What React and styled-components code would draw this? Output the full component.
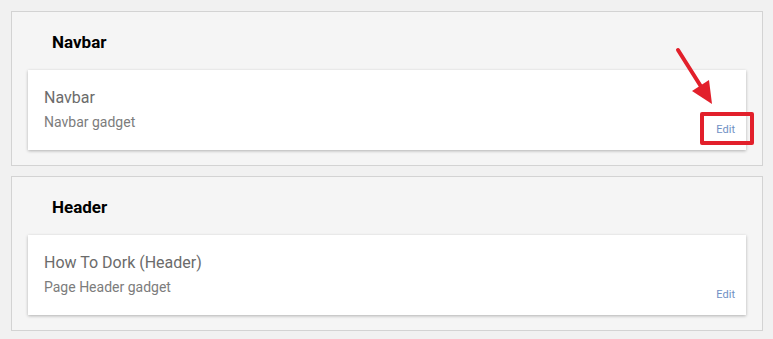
import React from "react";
import styled, { createGlobalStyle } from "styled-components";

const Global = createGlobalStyle`
  html, body { margin: 0; padding: 0; background: #f1f1f1; }
  body { font-family: Roboto, "Liberation Sans", Arial, sans-serif; }
`;

const Page = styled.div`
  display: flex;
  flex-direction: column;
  gap: 10px;
  padding: 11px 10px 0 11px;
  width: 752px;
`;

const Section = styled.section`
  position: relative;
  box-sizing: border-box;
  height: 155px;
  background: #f5f5f5;
  border: 1px solid #d3d3d3;
  padding: 0 16px;
`;

const SectionTitle = styled.h2`
  box-sizing: border-box;
  margin: 0;
  height: 58px;
  padding: 1px 0 0 24px;
  display: flex;
  align-items: center;
  font-size: 17px;
  font-weight: 700;
  color: #000;
`;

const Card = styled.div`
  position: relative;
  box-sizing: border-box;
  height: 80px;
  background: #fff;
  box-shadow: 0 1px 3px rgba(0, 0, 0, 0.28);
  display: flex;
  justify-content: space-between;
  padding: 0 11px 14px 16px;
`;

const Info = styled.div`
  display: flex;
  flex-direction: column;
  padding-top: 18px;
  gap: 5px;
`;

const CardTitle = styled.div`
  font-size: 16px;
  line-height: 20px;
  color: #6b6b6b;
`;

const CardSub = styled.div`
  font-size: 14px;
  line-height: 18px;
  color: #7c7c7c;
`;

const EditLink = styled.a`
  align-self: flex-end;
  font-size: 11px;
  line-height: 13px;
  color: #6f90c4;
  text-decoration: none;
  cursor: pointer;
`;

const Highlight = styled.div`
  position: absolute;
  left: 672px;
  top: 42px;
  width: 54px;
  height: 33px;
  box-sizing: border-box;
  border: 4px solid #e2202b;
  border-radius: 2px;
  pointer-events: none;
`;

const Arrow = styled.svg`
  position: absolute;
  left: 640px;
  top: -30px;
  overflow: visible;
  pointer-events: none;
`;

const gadgets = [
  { section: "Navbar", title: "Navbar", sub: "Navbar gadget", marked: true },
  { section: "Header", title: "How To Dork (Header)", sub: "Page Header gadget" },
];

export default function App() {
  return (
    <>
      <Global />
      <Page>
        {gadgets.map((g) => (
          <Section key={g.section}>
            <SectionTitle>{g.section}</SectionTitle>
            <Card>
              <Info>
                <CardTitle>{g.title}</CardTitle>
                <CardSub>{g.sub}</CardSub>
              </Info>
              <EditLink>Edit</EditLink>
              {g.marked && (
                <>
                  <Highlight />
                  <Arrow width="60" height="70" viewBox="0 0 60 70">
                    <line x1="10" y1="10" x2="33" y2="46.5" stroke="#e2202b" strokeWidth="4" strokeLinecap="round" />
                    <polygon points="44,64 41,40 24,51" fill="#e2202b" />
                  </Arrow>
                </>
              )}
            </Card>
          </Section>
        ))}
      </Page>
    </>
  );
}
